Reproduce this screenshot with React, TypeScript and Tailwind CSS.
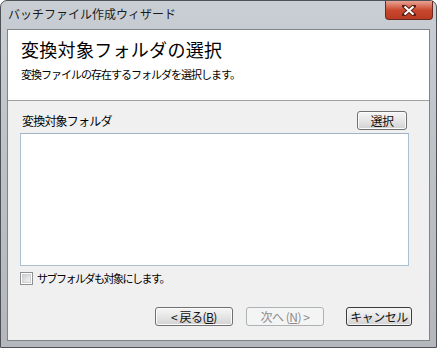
const font = { fontFamily: '"Noto Sans CJK JP", "Noto Sans", sans-serif' }

function WinButton({ label, disabled, strong }: { label: React.ReactNode; disabled?: boolean; strong?: boolean }) {
  if (disabled) {
    return (
      <div className="flex h-[19px] w-[78px] items-center justify-center rounded-[3px] border border-[#adb2b5] bg-[#f4f4f4] text-[12px] leading-none tracking-[-0.5px] text-[#8d8d8d]">
        {label}
      </div>
    )
  }
  return (
    <div
      className={
        "flex h-[19px] items-center justify-center rounded-[3px] border bg-gradient-to-b from-[#f6f6f6] via-[#e6e6e6] to-[#d2d2d2] text-[12px] leading-none tracking-[-0.5px] text-[#111] " +
        (strong ? "border-[#3c3c3c] shadow-[inset_0_0_0_1px_#f4f4f4]" : "border-[#707070] shadow-[inset_0_0_0_1px_#fbfbfb]")
      }
    >
      {label}
    </div>
  )
}

export default function App() {
  return (
    <div style={font} className="h-[348px] w-[437px] bg-white">
      <div className="flex h-full w-full flex-col rounded-t-[7px] border border-[#4e5256] bg-gradient-to-b from-[#c9ced4] via-[#bcc1c6] to-[#b4b8bc]">
        {/* title bar */}
        <div className="flex h-[28px] items-start justify-between">
          <span className="ml-[7px] mt-[6px] text-[12px] leading-[14px] text-[#1b1b1b]">バッチファイル作成ウィザード</span>
          <div className="mr-[3px] flex h-[19px] w-[48px] items-center justify-center rounded-b-[4px] border border-t-0 border-[#6b2a20] bg-gradient-to-b from-[#e8a293] via-[#c9482f] to-[#b93a22]">
            <svg width="14" height="11" viewBox="0 0 14 11">
              <path d="M2 1 L12 10 M12 1 L2 10" stroke="#5a1f14" strokeWidth="4" strokeLinecap="square" />
              <path d="M2.5 1.5 L11.5 9.5 M11.5 1.5 L2.5 9.5" stroke="#ffffff" strokeWidth="2.2" />
            </svg>
          </div>
        </div>

        {/* client area */}
        <div className="mx-[6px] mb-[6px] flex flex-1 flex-col border border-[#7f8488] bg-[#f0f0f0]">
          <div className="h-[71px] border-b border-[#a0a0a0] bg-white pl-[13px] pt-[8px]">
            <div className="text-[18px] leading-[23px] tracking-[0.3px] text-black">変換対象フォルダの選択</div>
            <div className="mt-[6px] text-[11px] leading-[14px] tracking-[-1px] text-black">変換ファイルの存在するフォルダを選択します。</div>
          </div>

          <div className="flex flex-1 flex-col pl-[12px] pr-[20px]">
            <div className="mt-[10px] flex items-center justify-between pl-[2px] pr-[2px]">
              <span className="text-[12px] leading-[14px] tracking-[-0.8px] text-black">変換対象フォルダ</span>
              <div className="w-[50px]">
                <WinButton label="選択" />
              </div>
            </div>

            <div className="mt-[3px] h-[133px] border border-[#abc0d0] border-t-[#9fb3c4] bg-white"></div>

            <div className="mt-[5px] flex items-center gap-[4px]">
              <div className="flex h-[13px] w-[13px] items-center justify-center border border-[#8e8f8f] bg-white">
                <div className="h-[9px] w-[9px] border border-[#d0d0d0] bg-gradient-to-br from-[#cbcfd5] to-[#f4f4f4]"></div>
              </div>
              <span className="text-[11px] leading-[14px] tracking-[-1.5px] text-black">サブフォルダも対象にします。</span>
            </div>

            <div className="mt-[22px] flex justify-end">
              <div className="w-[78px]">
                <WinButton label={<span>&lt;&nbsp;戻る(<span className="underline">B</span>)</span>} />
              </div>
              <div className="ml-[13px] w-[78px]">
                <WinButton disabled label={<span>次へ (<span className="underline">N</span>) &gt;</span>} />
              </div>
              <div className="-mr-[3px] ml-[22px] w-[66px]">
                <WinButton strong label="キャンセル" />
              </div>
            </div>
          </div>
        </div>
      </div>
    </div>
  )
}
